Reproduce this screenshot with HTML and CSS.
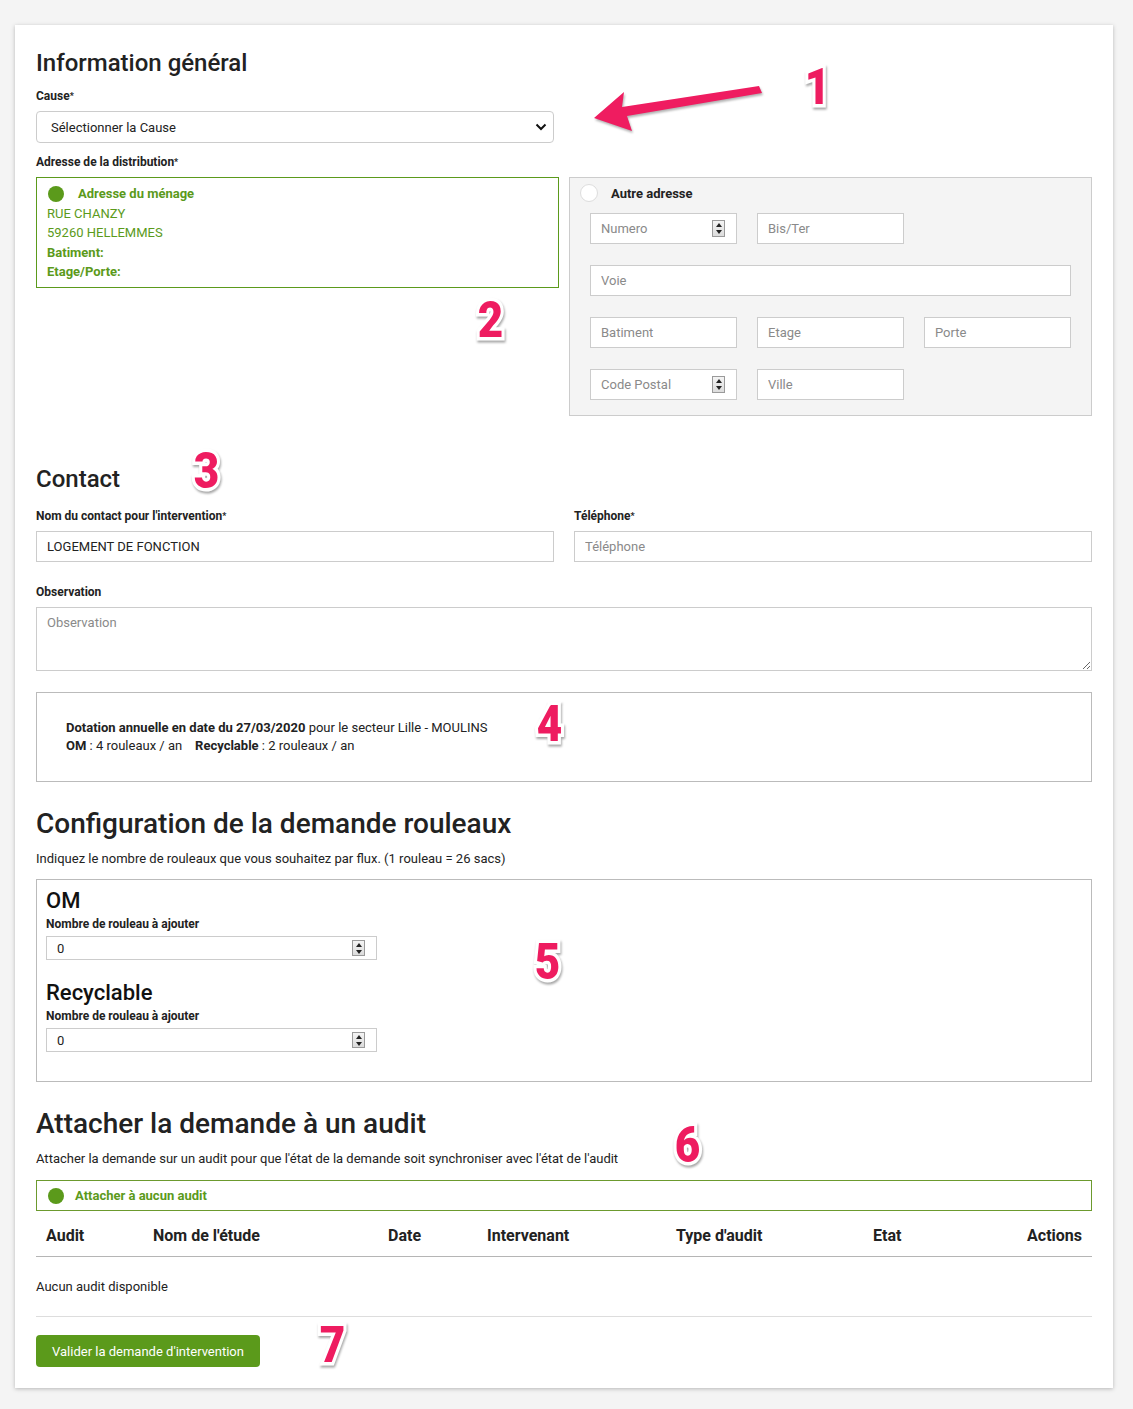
FILE: index.html
```html
<!DOCTYPE html>
<html lang="fr">
<head>
    <meta charset="UTF-8">
    <title>Demande d'intervention</title>
    <link rel="stylesheet" href="styles.css">
</head>
<body>
    <div class="card">
        <h2 class="title">Information général</h2>

        <label class="label">Cause<span class="req">*</span></label>
        <div class="select-wrap">
            <select class="select">
                <option>Sélectionner la Cause</option>
            </select>
            <svg class="chevron" width="12" height="8" viewBox="0 0 12 8"><path d="M1.5 1.5 L6 6 L10.5 1.5" fill="none" stroke="#111" stroke-width="2"/></svg>
        </div>

        <label class="label label-gap">Adresse de la distribution<span class="req">*</span></label>
        <div class="address-row">
            <div class="address-current">
                <div class="choice"><span class="dot"></span><strong>Adresse du ménage</strong></div>
                <div>RUE CHANZY</div>
                <div>59260 HELLEMMES</div>
                <div><strong>Batiment:</strong></div>
                <div><strong>Etage/Porte:</strong></div>
            </div>
            <div class="address-other">
                <div class="choice other-head"><span class="radio"></span><strong>Autre adresse</strong></div>
                <div class="address-grid">
                    <div class="field"><input placeholder="Numero"><span class="spin"><i class="up"></i><i class="down"></i></span></div>
                    <div class="field"><input placeholder="Bis/Ter"></div>
                    <div class="empty"></div>
                    <div class="field span3"><input placeholder="Voie"></div>
                    <div class="field"><input placeholder="Batiment"></div>
                    <div class="field"><input placeholder="Etage"></div>
                    <div class="field"><input placeholder="Porte"></div>
                    <div class="field"><input placeholder="Code Postal"><span class="spin"><i class="up"></i><i class="down"></i></span></div>
                    <div class="field"><input placeholder="Ville"></div>
                </div>
            </div>
        </div>

        <h2 class="title contact-title">Contact</h2>
        <div class="two-cols">
            <div>
                <label class="label">Nom du contact pour l'intervention<span class="req">*</span></label>
                <div class="field"><input value="LOGEMENT DE FONCTION"></div>
            </div>
            <div>
                <label class="label">Téléphone<span class="req">*</span></label>
                <div class="field"><input placeholder="Téléphone"></div>
            </div>
        </div>

        <label class="label obs-label">Observation</label>
        <textarea class="textarea" placeholder="Observation"></textarea>

        <div class="dotation">
            <div><strong>Dotation annuelle en date du 27/03/2020</strong> pour le secteur Lille - MOULINS</div>
            <div><strong>OM</strong> : 4 rouleaux / an &nbsp;&nbsp; <strong>Recyclable</strong> : 2 rouleaux / an</div>
        </div>

        <h2 class="big-title">Configuration de la demande rouleaux</h2>
        <p class="hint">Indiquez le nombre de rouleaux que vous souhaitez par flux. (1 rouleau = 26 sacs)</p>

        <div class="rolls">
            <h3 class="flux">OM</h3>
            <label class="label">Nombre de rouleau à ajouter</label>
            <div class="field small"><input value="0"><span class="spin"><i class="up"></i><i class="down"></i></span></div>

            <h3 class="flux flux-gap">Recyclable</h3>
            <label class="label">Nombre de rouleau à ajouter</label>
            <div class="field small"><input value="0"><span class="spin"><i class="up"></i><i class="down"></i></span></div>
        </div>

        <h2 class="big-title">Attacher la demande à un audit</h2>
        <p class="hint">Attacher la demande sur un audit pour que l'état de la demande soit synchroniser avec l'état de l'audit</p>

        <div class="audit-none">
            <div class="choice"><span class="dot"></span><strong>Attacher à aucun audit</strong></div>
        </div>

        <table class="audits">
            <colgroup>
                <col style="width:107px"><col style="width:235px"><col style="width:99px">
                <col style="width:189px"><col style="width:197px"><col style="width:120px"><col style="width:109px">
            </colgroup>
            <thead>
                <tr>
                    <th>Audit</th>
                    <th>Nom de l'étude</th>
                    <th>Date</th>
                    <th>Intervenant</th>
                    <th>Type d'audit</th>
                    <th>Etat</th>
                    <th class="right">Actions</th>
                </tr>
            </thead>
        </table>
        <p class="empty-msg">Aucun audit disponible</p>
        <hr class="sep">

        <button class="btn">Valider la demande d'intervention</button>

        <span class="num n1">1</span>
        <span class="num n2">2</span>
        <span class="num n3">3</span>
        <span class="num n4">4</span>
        <span class="num n5">5</span>
        <span class="num n6">6</span>
        <span class="num n7">7</span>

        <svg class="arrow" width="200" height="70" viewBox="575 75 200 70">
            <polygon points="594,118 624,92 622,107 759,86 762,93 627,116 632,131" fill="#ef1c60"/>
        </svg>
    </div>
</body>
</html>
```

FILE: styles.css
```css
* {
    box-sizing: border-box;
}

body {
    margin: 0;
    padding: 25px 20px 20px 15px;
    background: #f4f4f4;
    font-family: Roboto, "Liberation Sans", sans-serif;
    font-size: 13px;
    color: #222;
}

.card {
    position: relative;
    width: 1098px;
    background: #fff;
    padding: 22px 21px 21px;
    box-shadow: 0 1px 4px rgba(0, 0, 0, 0.25);
}

.title {
    margin: 0;
    font-size: 24px;
    font-weight: 500;
    line-height: 32px;
    color: #222;
}

.label {
    display: block;
    margin: 9px 0 7px;
    font-size: 12px;
    font-weight: 700;
    line-height: 16px;
}

.req {
    font-size: 9px;
    vertical-align: 1px;
}

.label-gap {
    margin-top: 11px;
}

.select-wrap {
    position: relative;
    width: 518px;
}

.select {
    display: block;
    width: 100%;
    height: 32px;
    padding: 0 14px;
    border: 1px solid #ccc;
    border-radius: 4px;
    background: #fff;
    font: 13px Roboto, sans-serif;
    color: #222;
    appearance: none;
    -webkit-appearance: none;
}

.chevron {
    position: absolute;
    right: 7px;
    top: 12px;
}

.address-row {
    display: grid;
    grid-template-columns: 1fr 1fr;
    column-gap: 10px;
    align-items: start;
}

.address-current {
    border: 1px solid #5b9a1b;
    padding: 6px 10px 5px;
    color: #5b9a1b;
    line-height: 19.5px;
}

.choice {
    display: flex;
    align-items: center;
}

.dot {
    width: 16px;
    height: 16px;
    border-radius: 50%;
    background: #5b9a1b;
    margin: 0 14px 0 1px;
}

.address-other {
    background: #f4f4f4;
    border: 1px solid #ccc;
    padding: 5px 20px 15px;
}

.other-head {
    height: 20px;
    margin-left: -10px;
    color: #222;
}

.radio {
    width: 18px;
    height: 18px;
    border-radius: 50%;
    border: 1px solid #ddd;
    background: #fff;
    margin-right: 13px;
}

.address-grid {
    display: grid;
    grid-template-columns: 147px 147px 147px;
    column-gap: 20px;
    row-gap: 21px;
    margin-top: 10px;
}

.span3 {
    grid-column: span 3;
}

.field {
    display: flex;
    align-items: center;
    height: 31px;
    background: #fff;
    border: 1px solid #ccc;
}

.field input {
    flex: 1;
    min-width: 0;
    height: 100%;
    border: none;
    outline: none;
    padding: 0 10px;
    background: transparent;
    font: 13px Roboto, sans-serif;
    color: #222;
}

.field input::placeholder,
.textarea::placeholder {
    color: #8a8a8a;
}

.spin {
    display: flex;
    flex-direction: column;
    justify-content: space-around;
    align-items: center;
    width: 13px;
    height: 17px;
    margin-right: 11px;
    border: 1px solid #9a9a9a;
    background: linear-gradient(#f4f4f4, #dcdcdc);
}

.spin i {
    width: 0;
    height: 0;
    border-left: 3px solid transparent;
    border-right: 3px solid transparent;
}

.spin .up {
    border-bottom: 4px solid #222;
}

.spin .down {
    border-top: 4px solid #222;
}

.contact-title {
    margin-top: 47px;
}

.two-cols {
    display: grid;
    grid-template-columns: 1fr 1fr;
    column-gap: 20px;
}

.two-cols .label {
    margin: 13px 0 7px;
}

.obs-label {
    margin: 22px 0 7px;
}

.textarea {
    display: block;
    width: 100%;
    height: 64px;
    border: 1px solid #ccc;
    padding: 7px 10px;
    font: 13px Roboto, sans-serif;
    color: #222;
}

.dotation {
    margin-top: 21px;
    height: 90px;
    border: 1px solid #bbb;
    padding: 26px 29px;
    line-height: 18px;
}

.big-title {
    margin: 24px 0 0;
    font-size: 28px;
    font-weight: 500;
    line-height: 36px;
    color: #222;
}

.hint {
    margin: 8px 0 0;
    line-height: 18px;
}

.rolls {
    margin-top: 11px;
    height: 203px;
    border: 1px solid #bbb;
    padding: 8px 9px;
}

.flux {
    margin: 0;
    font-size: 22px;
    font-weight: 500;
    line-height: 26px;
    color: #111;
}

.flux-gap {
    margin-top: 20px;
}

.rolls .label {
    margin: 2px 0 4px;
}

.field.small {
    width: 331px;
    height: 24px;
}

.field.small .spin {
    height: 16px;
}

.audit-none {
    margin-top: 12px;
    height: 31px;
    border: 1px solid #6c9a2e;
    padding: 0 10px;
    display: flex;
    align-items: center;
    color: #5b9a1b;
}

.audit-none .dot {
    margin-right: 11px;
}

.audits {
    width: 100%;
    border-collapse: collapse;
    table-layout: fixed;
}

.audits th {
    text-align: left;
    font-size: 16px;
    font-weight: 700;
    line-height: 20px;
    padding: 15px 10px 10px;
    border-bottom: 1px solid #b5b5b5;
    color: #222;
}

.audits th.right {
    text-align: right;
}

.empty-msg {
    margin: 21px 0 0;
    line-height: 18px;
}

.sep {
    margin: 20px 0 0;
    border: none;
    border-top: 1px solid #ddd;
}

.btn {
    margin-top: 18px;
    height: 32px;
    width: 224px;
    border: none;
    border-radius: 4px;
    background: #5b9a1b;
    color: #fff;
    font: 13px Roboto, sans-serif;
}

/* annotation numbers */
.num {
    position: absolute;
    font-family: Roboto, sans-serif;
    font-size: 50px;
    font-weight: 900;
    line-height: 1;
    color: #ee1c60;
    -webkit-text-stroke: 7px #fff;
    paint-order: stroke fill;
    filter: drop-shadow(1px 2px 1px rgba(0, 0, 0, 0.35));
    transform: scaleX(0.88);
}

.n1 { left: 788px; top: 37px; }
.n2 { left: 461px; top: 270px; }
.n3 { left: 177px; top: 421px; }
.n4 { left: 520px; top: 674px; }
.n5 { left: 518px; top: 912px; }
.n6 { left: 658px; top: 1095px; }
.n7 { left: 303px; top: 1295px; }

.arrow {
    position: absolute;
    left: 560px;
    top: 50px;
    filter: drop-shadow(1px 2px 1px rgba(0, 0, 0, 0.3));
}
```
